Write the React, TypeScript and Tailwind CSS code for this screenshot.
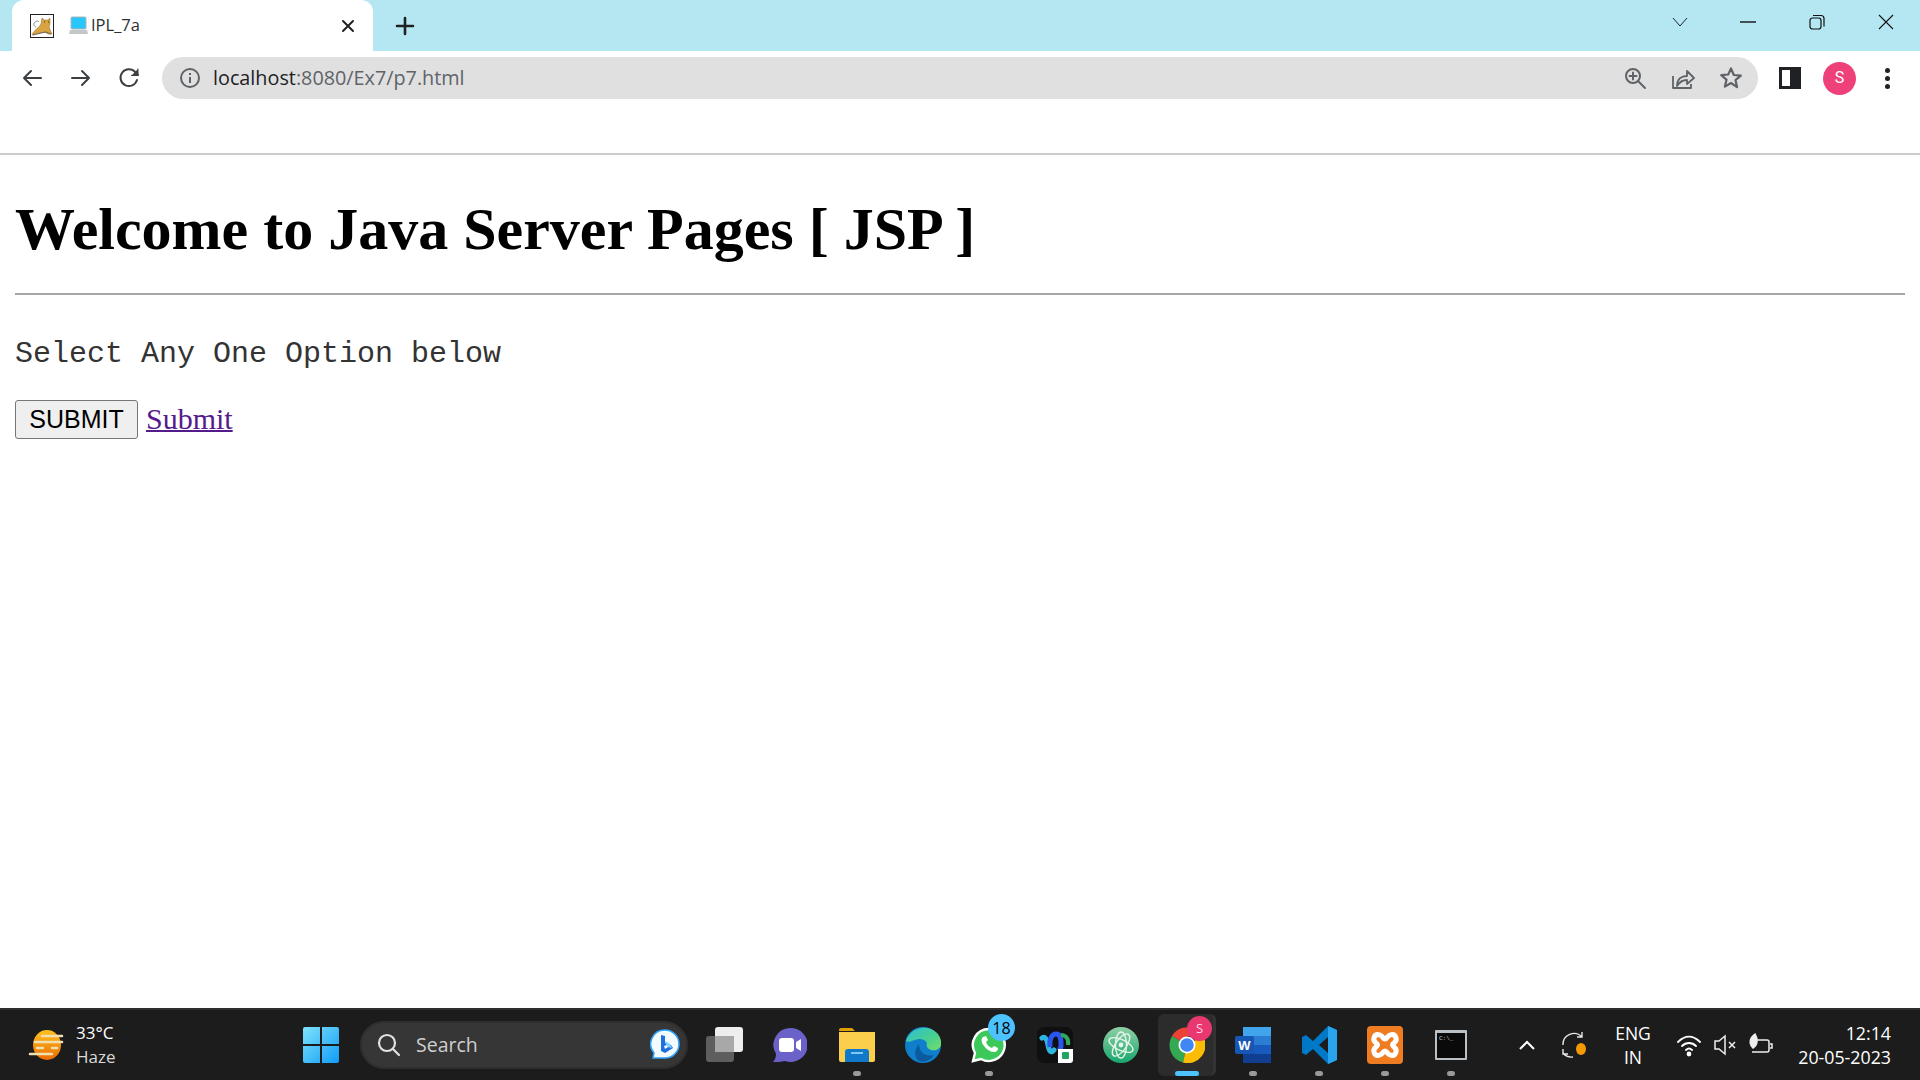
import React from "react";

const UI = { fontFamily: '"Open Sans","Noto Sans",sans-serif' };

function Tomcat() {
  return (
    <svg width="24" height="24" viewBox="0 0 24 24">
      <rect x="0.5" y="0.5" width="23" height="23" fill="#fff" stroke="#222" />
      <path d="M12 4l2 2h4l2-2 0 6-1 3 2 5 1 2h-4l-3-2-5 1-5 1-3 1c1-3 4-6 7-8l2-3z" fill="#d9a441" stroke="#8a6420" strokeWidth="0.5" />
      <path d="M6 13c-3-1-3-5 1-6 1 0 2 .5 2 1" fill="none" stroke="#8f8f8f" strokeWidth="1" />
      <path d="M3 21l8-2 5-1 5 2" fill="none" stroke="#555" strokeWidth="0.8" />
      <path d="M14 8h1M18 8h1" stroke="#333" strokeWidth="1" />
    </svg>
  );
}

function Laptop() {
  return (
    <svg width="19" height="19" viewBox="0 0 19 19">
      <rect x="2" y="1" width="15" height="12" rx="1" fill="#29c6fb" stroke="#aeb6bb" />
      <path d="M1 14h17l1 4H0z" fill="#c2c7ca" />
    </svg>
  );
}

function ToolIcon({ d, size = 24, color = "#3c4043", sw = 2 }: { d: string; size?: number; color?: string; sw?: number }) {
  return (
    <svg width={size} height={size} viewBox="0 0 24 24" fill="none" stroke={color} strokeWidth={sw} strokeLinecap="round" strokeLinejoin="round">
      <path d={d} />
    </svg>
  );
}

function TabStrip() {
  return (
    <div className="h-[51px] bg-[#b5e7f3] flex items-stretch">
      <div className="ml-[12px] w-[361px] bg-white rounded-t-[12px] flex items-center pl-[18px] pr-[18px]">
        <Tomcat />
        <div className="ml-[15px]"><Laptop /></div>
        <span className="ml-[3px] text-[16.5px] text-[#2a2f33]" style={UI}>IPL_7a</span>
        <div className="flex-1" />
        <svg width="14" height="14" viewBox="0 0 14 14" stroke="#222" strokeWidth="2" strokeLinecap="round"><path d="M2 2l10 10M12 2L2 12" /></svg>
      </div>
      <div className="ml-[22px] flex items-center">
        <svg width="20" height="20" viewBox="0 0 20 20" stroke="#202124" strokeWidth="2.6" strokeLinecap="round"><path d="M10 2v16M2 10h16" /></svg>
      </div>
      <div className="flex-1" />
      <div className="flex items-start">
        <div className="w-[69px] h-[44px] flex items-center justify-center">
          <svg width="16" height="10" viewBox="0 0 16 10" fill="none" stroke="#222" strokeWidth="1"><path d="M1 1l7 8 7-8" /></svg>
        </div>
        <div className="w-[68px] h-[44px] flex items-center justify-center">
          <svg width="16" height="2" viewBox="0 0 16 2" stroke="#111" strokeWidth="1.4"><path d="M0 1h16" /></svg>
        </div>
        <div className="w-[69px] h-[44px] flex items-center justify-center">
          <svg width="16" height="16" viewBox="0 0 16 16" fill="none" stroke="#111" strokeWidth="1.2"><rect x="1" y="4" width="11" height="11" rx="2.5" /><path d="M4 1.5h8a3 3 0 0 1 3 3v8" /></svg>
        </div>
        <div className="w-[69px] h-[44px] flex items-center justify-center">
          <svg width="16" height="16" viewBox="0 0 16 16" stroke="#111" strokeWidth="1.1"><path d="M1 1l14 14M15 1L1 15" /></svg>
        </div>
      </div>
    </div>
  );
}

function Toolbar() {
  return (
    <div className="h-[54px] bg-white flex items-center">
      <div className="w-[162px] flex items-center pl-[20px] gap-[24.5px]">
        <ToolIcon d="M21 12H4M11 5l-7 7 7 7" />
        <ToolIcon d="M3 12h17M13 5l7 7-7 7" />
        <svg width="24" height="24" viewBox="0 0 24 24" fill="none" stroke="#3c4043" strokeWidth="2" strokeLinecap="round" strokeLinejoin="round">
          <path d="M20 14a8.4 8.4 0 1 1-1.8-8L21 9" />
          <path d="M21 3v6.5H14.5" fill="#3c4043" strokeWidth="1" />
        </svg>
      </div>
      <div className="w-[1596px] h-[42px] rounded-full bg-[#e0e0e0] flex items-center pl-[17px] pr-[15px]">
        <svg width="22" height="22" viewBox="0 0 22 22" fill="none" stroke="#5f6368" strokeWidth="2">
          <circle cx="11" cy="11" r="9" />
          <path d="M11 10v6M11 6v2" />
        </svg>
        <span className="ml-[12px] text-[19.8px] text-[#5f6368]" style={UI}><span className="text-[#202124]">localhost</span>:8080/Ex7/p7.html</span>
        <div className="flex-1" />
        <div className="flex items-center gap-[24px]">
          <svg width="24" height="24" viewBox="0 0 24 24" fill="none" stroke="#5f6368" strokeWidth="2" strokeLinecap="round"><circle cx="10" cy="10" r="7" /><path d="M15 15l7 7M10 6.5v7M6.5 10h7" /></svg>
          <svg width="24" height="24" viewBox="0 0 24 24" fill="none" stroke="#5f6368" strokeWidth="1.8" strokeLinejoin="round"><path d="M2 10v12h18v-4" /><path d="M6 20c0-7 4-10 10-10V5l7 7-7 6v-4c-4 0-7 1-10 6z" /></svg>
          <svg width="24" height="24" viewBox="0 0 24 24" fill="none" stroke="#5f6368" strokeWidth="2.2" strokeLinejoin="round"><path d="M12 2.5l2.8 6.5 7 .6-5.3 4.6 1.6 6.9L12 17l-6.1 3.6 1.6-6.9-5.3-4.6 7-.6z" /></svg>
        </div>
      </div>
      <div className="ml-[21px] flex items-center">
        <div className="w-[22px] h-[22px] border-[3px] border-[#202124] flex justify-end">
          <div className="w-[8px] h-full bg-[#202124]" />
        </div>
        <div className="ml-[22px] w-[33px] h-[33px] rounded-full bg-[#ee4079] flex items-center justify-center text-white text-[16px]" style={{ fontFamily: "Roboto, sans-serif" }}>S</div>
        <div className="ml-[29px] flex flex-col gap-[3px]">
          <div className="w-[5px] h-[5px] rounded-full bg-[#202124]" />
          <div className="w-[5px] h-[5px] rounded-full bg-[#202124]" />
          <div className="w-[5px] h-[5px] rounded-full bg-[#202124]" />
        </div>
      </div>
    </div>
  );
}

function Page() {
  return (
    <div className="flex-1 bg-white overflow-hidden flex flex-col">
      <div className="h-[48px] shrink-0" />
      <div className="flex-1 border-t-2 border-[#cccccc] px-[15px]">
        <h1 className="mt-[40px] text-[60px] leading-[69px] font-bold text-black whitespace-nowrap" style={{ fontFamily: '"Liberation Serif", serif' }}>
          Welcome to Java Server Pages [ JSP ]
        </h1>
        <div className="mt-[29px] h-[2px] bg-[#a6a6a6]" />
        <p className="mt-[42px] text-[30px] leading-[34px] text-[#333333]" style={{ fontFamily: '"Liberation Mono", monospace' }}>
          Select Any One Option below
        </p>
        <div className="mt-[29px] flex items-center gap-[8px]">
          <button className="w-[123px] h-[39px] bg-[#efefef] border border-[#767676] rounded-[3px] text-[25px] text-black" style={{ fontFamily: '"Liberation Sans", sans-serif' }}>SUBMIT</button>
          <a className="mb-[2px] text-[30px] leading-[34px] text-[#551a8b] underline decoration-2" style={{ fontFamily: '"Liberation Serif", serif' }}>Submit</a>
        </div>
      </div>
    </div>
  );
}

function TaskIcon({ children, dot, active }: { children: React.ReactNode; dot?: boolean; active?: boolean }) {
  return (
    <div className="w-[66px] h-[70px] relative flex items-center justify-center">
      {active && <div className="absolute left-[4px] top-[4px] w-[58px] h-[62px] rounded-[6px] bg-[#2c2c2c] border-r-[3px] border-[#333]" />}
      <div className="relative w-[38px] h-[38px] flex items-center justify-center">{children}</div>
      {dot && <div className="absolute left-[29px] bottom-[4px] w-[8px] h-[5px] rounded-full bg-[#9a9a9a]" />}
      {active && <div className="absolute left-[21px] bottom-[4px] w-[24px] h-[5px] rounded-full bg-[#4cc2ff]" />}
    </div>
  );
}

function Taskbar() {
  return (
    <div className="h-[72px] bg-[#1c1c1c] border-t-2 border-[#2e2e2e] flex items-center relative text-white shrink-0" style={UI}>
      <div className="w-[303px] pl-[28px] flex items-center shrink-0">
        <svg width="38" height="32" viewBox="0 0 38 32">
          <defs><linearGradient id="sun" x1="0" y1="0" x2="0" y2="1"><stop offset="0" stopColor="#fdc31e" /><stop offset="1" stopColor="#ec6a05" /></linearGradient></defs>
          <ellipse cx="19" cy="16" rx="14" ry="15" fill="url(#sun)" />
          <g stroke="#f1dfb0" strokeWidth="2.6" strokeLinecap="round">
            <path d="M14 7h20M7 13h27M9 19h6M24 19h5M2 25h22" />
          </g>
        </svg>
        <div className="ml-[10px] text-[17px] leading-[24px]">
          <div>33°C</div>
          <div className="text-[#d8d8d8]">Haze</div>
        </div>
      </div>
      <svg width="36" height="36" viewBox="0 0 36 36" className="shrink-0">
        <defs><linearGradient id="win" x1="0" y1="0" x2="1" y2="1"><stop offset="0" stopColor="#7fe3fb" /><stop offset="1" stopColor="#109bf6" /></linearGradient></defs>
        <path d="M0 2a2 2 0 0 1 2-2h15v17H0zM19 0h15a2 2 0 0 1 2 2v15H19zM0 19h17v17H2a2 2 0 0 1-2-2zM19 19h17v15a2 2 0 0 1-2 2H19z" fill="url(#win)" />
      </svg>
      <div className="ml-[21px] w-[328px] h-[48px] rounded-full bg-[#363636] border-2 border-[#2f2f2f] flex items-center pl-[14px] pr-[6px] shrink-0">
        <svg width="26" height="26" viewBox="0 0 26 26" fill="none" stroke="#e2e2e2" strokeWidth="2.2" strokeLinecap="round"><circle cx="11" cy="11" r="8" /><path d="M17 17l6 6" /></svg>
        <span className="ml-[14px] text-[19.5px] text-[#cfcfcf]">Search</span>
        <div className="flex-1" />
        <svg width="30" height="32" viewBox="0 0 30 32">
          <path d="M15 1a14 14 0 0 1 0 28H3l1-5A14 14 0 0 1 15 1z" fill="#f4fbff" stroke="#2fa4ff" strokeWidth="1.5" />
          <path d="M11 6l4 1v7l6 2 2 3-8 5-4-2z" fill="#1f6fe0" />
          <path d="M15 12l5 3 2 4-5-1z" fill="#7bd0ff" />
          <path d="M14 17l3-1 1 2-3 2z" fill="#f4fbff" />
        </svg>
      </div>
      <div className="ml-[4px] flex shrink-0">
        <TaskIcon>
          <svg width="38" height="36" viewBox="0 0 38 36">
            <rect x="0" y="9" width="28" height="26" rx="3" fill="#5e5e5e" />
            <rect x="9" y="0" width="28" height="25" rx="3" fill="#eeeeee" />
            <rect x="9" y="9" width="19" height="16" fill="#a8a8a8" />
          </svg>
        </TaskIcon>
        <TaskIcon>
          <svg width="36" height="36" viewBox="0 0 36 36" className="-ml-[4px]">
            <path d="M19 1a17 17 0 1 1-5 33c-4 1-8 1-12 1 2-2 3-5 3-8A17 17 0 0 1 19 1z" fill="#6a62c9" />
            <rect x="8" y="11" width="15" height="14" rx="3" fill="#fff" />
            <path d="M25 15l5-3v12l-5-3z" fill="#fff" />
          </svg>
        </TaskIcon>
        <TaskIcon dot>
          <svg width="36" height="34" viewBox="0 0 36 34">
            <path d="M0 2a2 2 0 0 1 2-2h11l3 3h-16z" fill="#e0a000" />
            <path d="M0 4h36v28a2 2 0 0 1-2 2H2a2 2 0 0 1-2-2z" fill="#fbcf4b" />
            <path d="M6 34V24a3 3 0 0 1 3-3h18a3 3 0 0 1 3 3v10z" fill="#1179c9" />
            <rect x="12" y="24" width="12" height="2" fill="#7fc8f2" />
          </svg>
        </TaskIcon>
        <TaskIcon>
          <svg width="36" height="36" viewBox="0 0 36 36">
            <defs><linearGradient id="edge" x1="0" y1="0" x2="1" y2="1"><stop offset="0" stopColor="#2bc0d6" /><stop offset="0.6" stopColor="#4ad08c" /><stop offset="1" stopColor="#77dd6c" /></linearGradient></defs>
            <circle cx="18" cy="18" r="18" fill="#0f7fcc" />
            <path d="M1 14C4 3 16-2 26 2c7 3 11 9 10 16-1 4-5 6-10 5-4-1-5-4-4-7-2-4-8-5-12-3-4 1-7 3-9 1z" fill="url(#edge)" />
            <path d="M14 17c0 9 7 13 15 11-4 6-10 8-15 6-5-3-5-12 0-17z" fill="#0c5a9e" />
          </svg>
        </TaskIcon>
        <TaskIcon dot>
          <svg width="36" height="36" viewBox="0 0 36 36">
            <path d="M18 2a16 16 0 1 1-8 30L2 34l2-8A16 16 0 0 1 18 2z" fill="#3cc95a" stroke="#fff" strokeWidth="2.4" />
            <path d="M12 10c-2 2-2 5 1 9s7 6 10 6 4-2 4-4l-4-2-2 2c-3-1-5-3-6-6l2-2-2-4z" fill="#fff" />
          </svg>
          <div className="absolute left-[18px] top-[-12px] w-[27px] h-[27px] rounded-full bg-[#4cc2ff] flex items-center justify-center text-[16px] text-black">18</div>
        </TaskIcon>
        <TaskIcon>
          <svg width="36" height="36" viewBox="0 0 36 36">
            <rect width="36" height="36" rx="7" fill="#101010" />
            <path d="M5 11c3-2 5 1 6 7s3 9 6 5" fill="none" stroke="#2fb4e0" strokeWidth="5" strokeLinecap="round" />
            <path d="M13 20c-1-8 2-13 6-13 5 0 5 6 5 10s0 5-3 6" fill="none" stroke="#2a55ee" strokeWidth="5" />
            <path d="M24 8c5 0 8 4 7 10" fill="none" stroke="#31a85a" strokeWidth="4" />
            <path d="M21 22h15v11a3 3 0 0 1-3 3H21z" fill="#fff" />
            <rect x="25" y="25" width="7" height="7" rx="1" fill="#1fa463" />
          </svg>
        </TaskIcon>
        <TaskIcon>
          <svg width="36" height="36" viewBox="0 0 36 36">
            <defs><linearGradient id="atom" x1="0" y1="0" x2="0" y2="1"><stop offset="0" stopColor="#8fd0a4" /><stop offset="1" stopColor="#18a66e" /></linearGradient></defs>
            <circle cx="18" cy="18" r="18" fill="url(#atom)" />
            <g fill="none" stroke="#e6f6ea" strokeWidth="1.4">
              <ellipse cx="18" cy="18" rx="13" ry="5.5" transform="rotate(25 18 18)" />
              <ellipse cx="18" cy="18" rx="13" ry="5.5" transform="rotate(-55 18 18)" />
              <ellipse cx="18" cy="18" rx="5.5" ry="13" />
            </g>
            <circle cx="18" cy="18" r="2.4" fill="#e6f6ea" />
          </svg>
        </TaskIcon>
        <TaskIcon active>
          <svg width="36" height="36" viewBox="0 0 36 36">
            <path d="M18 18L3 9A18 18 0 0 1 34 9H18z" fill="#ea4335" />
            <path d="M18 18L3 9A18 18 0 0 0 14 35.6z" fill="#34a853" />
            <path d="M18 18L34 9A18 18 0 0 1 14 35.6z" fill="#fbbc04" />
            <circle cx="18" cy="18" r="8.5" fill="#fff" />
            <circle cx="18" cy="18" r="6.8" fill="#4285f4" />
          </svg>
          <div className="absolute left-[19px] top-[-10px] w-[25px] h-[25px] rounded-full bg-[#e9376f] flex items-center justify-center text-[13px] text-[#ffd8e6]">S</div>
        </TaskIcon>
        <TaskIcon dot>
          <svg width="36" height="36" viewBox="0 0 36 36">
            <path d="M8 2a2 2 0 0 1 2-2h24a2 2 0 0 1 2 2v32a2 2 0 0 1-2 2H10a2 2 0 0 1-2-2z" fill="#2b7cd3" />
            <rect x="8" y="0" width="28" height="9" fill="#41a5ee" />
            <rect x="8" y="18" width="28" height="9" fill="#185abd" />
            <rect x="8" y="27" width="28" height="9" fill="#103f91" />
            <rect x="0" y="9" width="19" height="18" rx="2" fill="#1656b4" />
            <text x="9.5" y="23" textAnchor="middle" fontSize="13" fontWeight="700" fill="#fff" fontFamily="Liberation Sans, sans-serif">W</text>
          </svg>
        </TaskIcon>
        <TaskIcon dot>
          <svg width="36" height="38" viewBox="0 0 36 38">
            <path d="M27 0l9 4v30l-9 4-15-15-7 6-4-2v-16l4-2 7 6z" fill="#0078c8" />
            <path d="M27 0l9 4v30l-9 4z" fill="#2aa4ee" />
            <path d="M27 11l-9 8 9 8z" fill="#1c1c1c" />
          </svg>
        </TaskIcon>
        <TaskIcon dot>
          <svg width="36" height="38" viewBox="0 0 36 38">
            <rect x="0" y="0" width="36" height="38" rx="4" fill="#f07c22" />
            <g fill="none" stroke="#fff" strokeWidth="5">
              <path d="M13 9c-6-2-8 5-4 8 2 1 2 3 0 4-4 3-2 10 4 8 3-1 3-4 5-4s2 3 5 4c6 2 8-5 4-8-2-1-2-3 0-4 4-3 2-10-4-8-3 1-3 4-5 4s-2-3-5-4z" />
            </g>
          </svg>
        </TaskIcon>
        <TaskIcon dot>
          <svg width="32" height="30" viewBox="0 0 32 30">
            <rect width="32" height="30" rx="1" fill="#b9c0c6" />
            <rect x="2" y="3" width="28" height="25" fill="#0a0a0a" />
            <text x="4" y="10" fontSize="6" fill="#c8c8c8" fontFamily="Liberation Mono, monospace">C:\_</text>
          </svg>
        </TaskIcon>
      </div>
      <div className="ml-[35px] flex items-center shrink-0">
        <svg width="16" height="10" viewBox="0 0 16 10" fill="none" stroke="#fff" strokeWidth="2"><path d="M1 9l7-7 7 7" /></svg>
        <svg className="ml-[26px]" width="28" height="28" viewBox="0 0 28 28" fill="none" stroke="#e8e8e8" strokeWidth="1.4">
          <path d="M2 14a11 11 0 0 1 19-8M21 1v5h-5" />
          <path d="M2 18v5h5M2 22a11 11 0 0 0 10 4" />
          <ellipse cx="20" cy="18" rx="5" ry="6" fill="#f59a00" stroke="none" />
        </svg>
        <div className="ml-[26px] w-[36px] text-center text-[17.5px] leading-[24px]">
          <div>ENG</div>
          <div>IN</div>
        </div>
        <svg className="ml-[25px]" width="26" height="24" viewBox="0 0 26 24" fill="none" stroke="#fff" strokeWidth="1.8" strokeLinecap="round">
          <path d="M2 9c7-7 15-7 22 0M6 13c4-4 10-4 14 0M10 17c2-2 4-2 6 0" />
          <circle cx="13" cy="21" r="1.5" fill="#fff" />
        </svg>
        <svg className="ml-[10px]" width="26" height="24" viewBox="0 0 26 24" fill="none" stroke="#eee" strokeWidth="1.5">
          <path d="M3 8h4l6-5v18l-6-5H3z" />
          <path d="M17 9l6 6M23 9l-6 6" />
        </svg>
        <svg className="ml-[9px]" width="26" height="26" viewBox="0 0 26 26" fill="none" stroke="#eee" strokeWidth="1.5">
          <path d="M10 8h10a2 2 0 0 1 2 2v8a2 2 0 0 1-2 2H5M23 12h2v4h-2" />
          <path d="M8 2c-6 4-6 10-2 14 5-3 5-9 2-14z" fill="#eee" />
        </svg>
      </div>
      <div className="ml-auto pr-[29px] text-right text-[17.8px] leading-[24px] whitespace-nowrap">
        <div>12:14</div>
        <div>20-05-2023</div>
      </div>
    </div>
  );
}

export default function App() {
  return (
    <div className="w-[1920px] h-[1080px] flex flex-col overflow-hidden bg-white">
      <TabStrip />
      <Toolbar />
      <Page />
      <Taskbar />
    </div>
  );
}
